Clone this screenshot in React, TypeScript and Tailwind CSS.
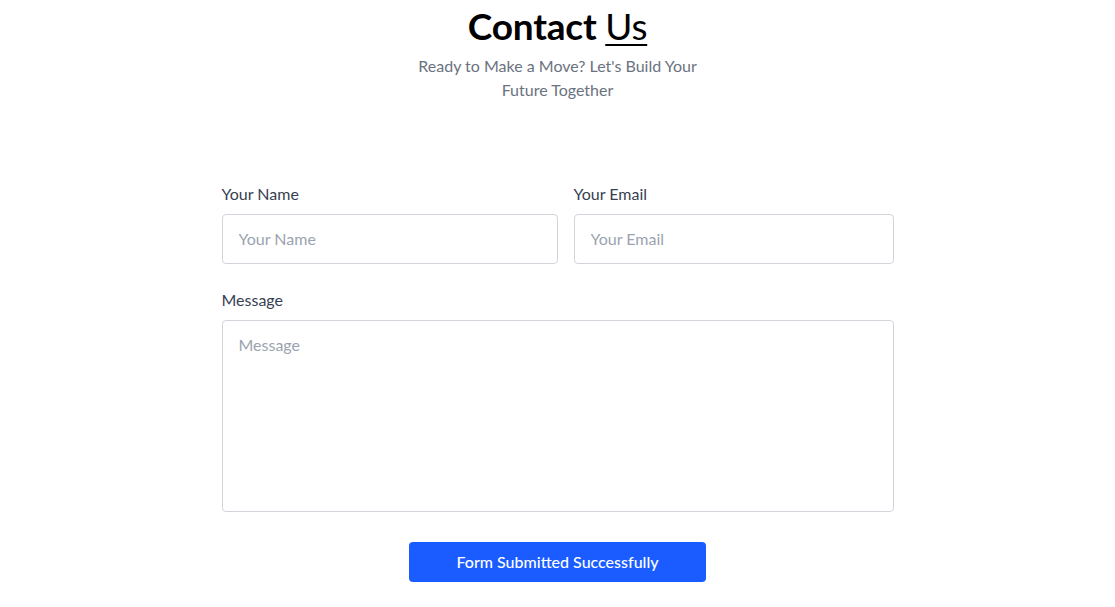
export default function App() {
  return (
    <div className="min-h-screen bg-white" style={{ fontFamily: '"Lato", "Noto Sans", sans-serif' }}>
      <div className="flex flex-col items-center pt-[4px]">
        <h1 className="text-[37px] leading-[44px] font-bold text-black tracking-[-0.2px]">
          Contact <span className="font-normal underline decoration-[1.5px] underline-offset-[4px]">Us</span>
        </h1>
        <p className="mt-[6px] w-[300px] text-center text-[16px] leading-[24px] text-[#6b7280]">
          Ready to Make a Move? Let's Build Your Future Together
        </p>
      </div>
      <form className="mx-auto mt-[82px] w-[672px]" onSubmit={(e) => e.preventDefault()}>
        <div className="grid grid-cols-[336px_320px] gap-x-4">
          <div className="flex flex-col">
            <label className="text-[16px] leading-[20px] text-[#374151]">Your Name</label>
            <input
              className="mt-[10px] h-[50px] rounded border border-[#d1d5db] px-4 pb-[1px] text-[16px] text-[#374151] placeholder:text-[#9ca3af] outline-none"
              placeholder="Your Name"
            />
          </div>
          <div className="flex flex-col">
            <label className="text-[16px] leading-[20px] text-[#374151]">Your Email</label>
            <input
              className="mt-[10px] h-[50px] rounded border border-[#d1d5db] px-4 pb-[1px] text-[16px] text-[#374151] placeholder:text-[#9ca3af] outline-none"
              placeholder="Your Email"
            />
          </div>
        </div>
        <div className="mt-[26px] flex flex-col">
          <label className="text-[16px] leading-[20px] text-[#374151]">Message</label>
          <textarea
            className="mt-[10px] h-[192px] resize-none rounded border border-[#d1d5db] px-4 py-[14px] text-[16px] leading-[20px] text-[#374151] placeholder:text-[#9ca3af] outline-none"
            placeholder="Message"
          />
        </div>
        <div className="mt-[30px] flex justify-center">
          <button
            type="submit"
            className="h-[40px] w-[297px] rounded bg-[#1a5cff] text-[16px] font-medium text-white"
          >
            Form Submitted Successfully
          </button>
        </div>
      </form>
    </div>
  );
}
